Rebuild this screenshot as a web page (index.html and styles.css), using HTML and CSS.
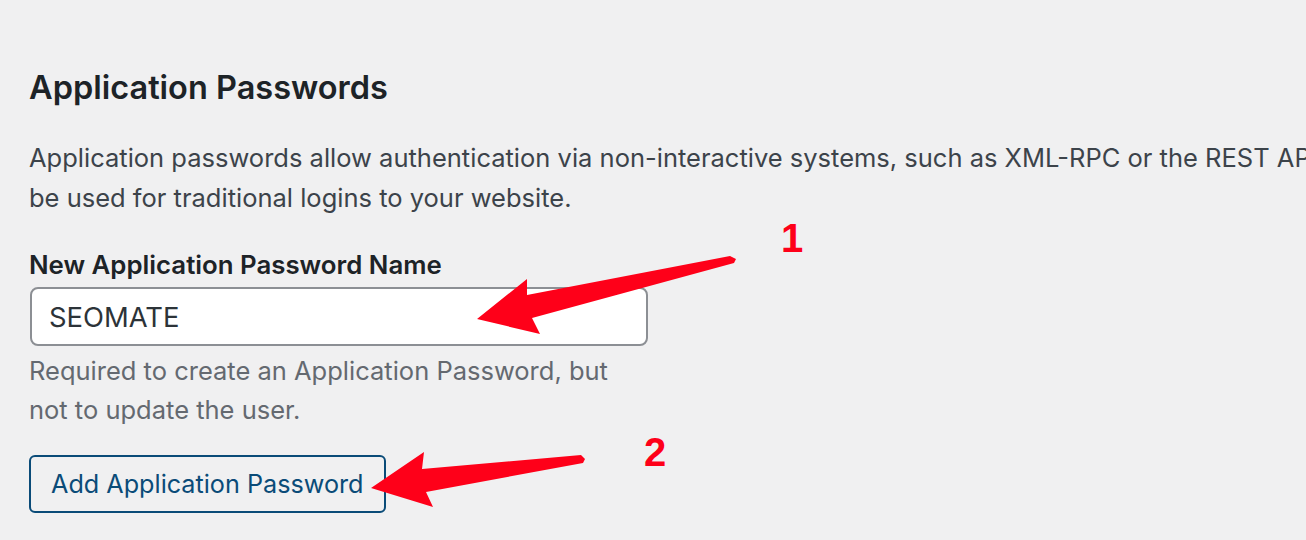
FILE: index.html
```html
<!DOCTYPE html>
<html lang="en">
<head>
<meta charset="utf-8">
<title>Application Passwords</title>
<link rel="stylesheet" href="styles.css">
</head>
<body>
<main class="page">
  <h2 class="title">Application Passwords</h2>
  <div class="intro-clip">
    <p class="intro">Application passwords allow authentication via non-interactive systems, such as XML-RPC or the REST API, without providing your actual password. Application passwords can be easily revoked. They cannot<br>be used for traditional logins to your website.</p>
  </div>
  <div class="field">
    <label class="label" for="app-name">New Application Password Name</label>
    <input class="input" id="app-name" type="text" value="SEOMATE">
    <p class="desc">Required to create an Application Password, but<br>not to update the user.</p>
  </div>
  <button class="button" type="button">Add Application Password</button>

  <svg class="overlay" width="1306" height="540" viewBox="0 0 1306 540" aria-hidden="true">
    <polygon fill="#fe0019" points="730,256 527,295 527,279 477,319 540,334 532,318 734,263 736,259"/>
    <polygon fill="#fe0019" points="581,455 422,469 424,452 371,488 433,507 426,492 583,463 585,459"/>
  </svg>
  <span class="num num-1">1</span>
  <span class="num num-2">2</span>
</main>
</body>
</html>
```

FILE: styles.css
```css
html, body {
  margin: 0;
  padding: 0;
  background: #f0f0f1;
  overflow: hidden;
}

.page {
  position: relative;
  width: 1306px;
  height: 540px;
  padding: 68px 0 0 29px;
  box-sizing: border-box;
  font-family: Inter, "Noto Sans", "Liberation Sans", sans-serif;
  color: #1d2327;
  overflow: hidden;
}

.title {
  margin: 0;
  font-size: 32.5px;
  line-height: 40px;
  font-weight: 600;
  color: #1d2327;
}

.intro-clip {
  margin-top: 30px;
  width: 1277px;
  overflow: hidden;
}

.intro {
  margin: 0;
  font-size: 25.5px;
  line-height: 40px;
  color: #3c434a;
  white-space: nowrap;
}

.field {
  margin-top: 30px;
  display: flex;
  flex-direction: column;
  align-items: flex-start;
}

.label {
  font-size: 25.8px;
  line-height: 34px;
  font-weight: 600;
  color: #1d2327;
}

.input {
  margin: 5px 0 0 1px;
  width: 618px;
  height: 59px;
  box-sizing: border-box;
  border: 2px solid #8c8f94;
  border-radius: 8px;
  background: #fff;
  padding: 0 17px;
  font-family: Inter, "Noto Sans", "Liberation Sans", sans-serif;
  font-size: 27.4px;
  color: #2c3338;
  outline: none;
}

.desc {
  margin: 5px 0 0;
  font-size: 25.5px;
  line-height: 39px;
  color: #646970;
}

.button {
  margin-top: 26px;
  width: 357px;
  height: 58px;
  box-sizing: border-box;
  border: 2px solid #0a4b78;
  border-radius: 6px;
  background: #f0f0f1;
  color: #0a4b78;
  font-family: Inter, "Noto Sans", "Liberation Sans", sans-serif;
  font-size: 25.2px;
  padding: 0 20px;
  text-align: left;
  white-space: nowrap;
}

.overlay {
  position: absolute;
  left: 0;
  top: 0;
  pointer-events: none;
}

.num {
  position: absolute;
  font-family: "Liberation Sans", Arial, sans-serif;
  font-weight: 700;
  font-size: 40px;
  line-height: 1;
  color: #fe0019;
}

.num-1 {
  left: 781px;
  top: 218px;
}

.num-2 {
  left: 644px;
  top: 432px;
}
```
